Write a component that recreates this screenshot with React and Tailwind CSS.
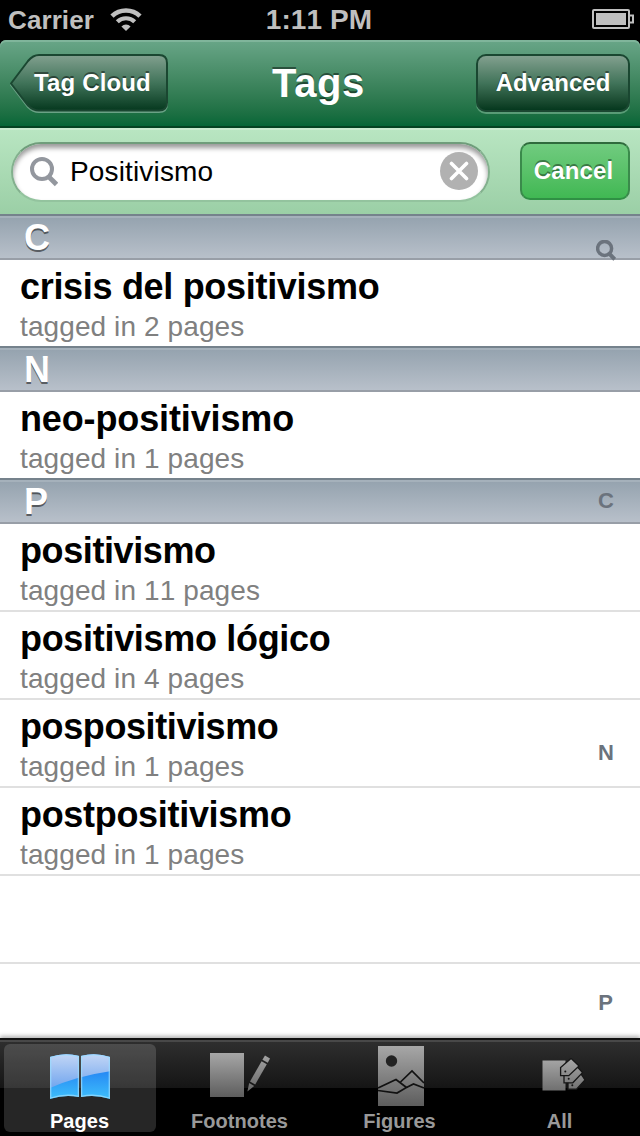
import { useState } from "react";

const sections = [
  { letter: "C", tags: [{ name: "crisis del positivismo", pages: 2, track: "tracking-[-0.31px]" }] },
  { letter: "N", tags: [{ name: "neo-positivismo", pages: 1, track: "tracking-[-0.13px]" }] },
  {
    letter: "P",
    tags: [
      { name: "positivismo", pages: 11, track: "tracking-[-0.4px]" },
      { name: "positivismo lógico", pages: 4, track: "tracking-[-0.31px]" },
      { name: "pospositivismo", pages: 1, track: "tracking-[-0.4px]" },
      { name: "postpositivismo", pages: 1, track: "tracking-[-0.31px]" },
    ],
  },
];

const SearchIcon = ({ className, ring = 4 }) => (
  <svg className={className} viewBox="0 0 28 30" fill="none" stroke="currentColor">
    <circle cx="12" cy="12" r="10" strokeWidth={ring} />
    <path d="M18.5 19.5 L26.5 27.5" strokeWidth={ring + 0.8} />
  </svg>
);

const StatusBar = () => (
  <div className="flex h-10 shrink-0 items-center justify-between bg-black pl-2 pr-[6px] text-[26px] font-bold leading-10 text-[#bfbfbf]">
    <div className="flex w-[200px] items-center">
      <span className="w-[102px] tracking-[0.1px]">Carrier</span>
      <svg width="32" height="24" viewBox="0 0 32 24" fill="none" stroke="#bfbfbf">
        <path d="M2 8.2 A20 20 0 0 1 30 8.2" strokeWidth="4.6" />
        <path d="M7.3 13.8 A12.4 12.4 0 0 1 24.7 13.8" strokeWidth="4.2" />
        <path d="M16 23 L11.4 18.4 A6.8 6.8 0 0 1 20.6 18.4 Z" fill="#bfbfbf" stroke="none" />
      </svg>
    </div>
    <span className="-ml-[4px] text-[28px] tracking-[0.1px] [font-kerning:none]">1:11 PM</span>
    <div className="-mt-[2px] flex w-[200px] justify-end">
      <svg width="42" height="20" viewBox="0 0 42 20" fill="none">
        <rect x="1" y="1" width="36" height="18" rx="1" stroke="#bfbfbf" strokeWidth="2" />
        <rect x="4" y="4" width="30" height="12" fill="#bfbfbf" />
        <path d="M38 6.5 H41 V13.5 H38" stroke="#bfbfbf" strokeWidth="2" />
      </svg>
    </div>
  </div>
);

const NavBar = () => (
  <div className="shrink-0 bg-black">
    <div className="flex h-[88px] items-start justify-between rounded-t-[6px] border-b-2 border-[#034322] bg-linear-to-b from-[#69a688] to-[#046637] px-[10px] pt-[14px] text-white shadow-[inset_0_2px_0_#80b59b]">
      <button className="relative h-[59px] w-[158px]">
        <svg className="absolute left-0 top-0" width="158" height="60" viewBox="0 0 158 60">
          <defs>
            <linearGradient id="back" x1="0" y1="0" x2="0" y2="1">
              <stop offset="0" stopColor="#82a08f" />
              <stop offset="0.5" stopColor="#41745a" />
              <stop offset="1" stopColor="#05381e" />
            </linearGradient>
          </defs>
          <path
            d="M1 31 L18 8 Q23 2.5 29 2.5 H149 Q157 2.5 157 10.5 V50 Q157 58 149 58 H29 Q23 58 18 53 Z"
            fill="none"
            stroke="#6ba286"
            strokeWidth="2"
          />
          <path
            d="M1 29.5 L18 7 Q23 1 29 1 H149 Q157 1 157 9 V48.5 Q157 56.5 149 56.5 H29 Q23 56.5 18 51.5 Z"
            fill="url(#back)"
            stroke="#1a4731"
            strokeWidth="2"
          />
        </svg>
        <span className="relative -top-px block pl-[7px] text-[24px] font-bold leading-[58px] tracking-[0.15px] [text-shadow:0_-2px_0_rgba(0,0,0,0.45)]">
          Tag Cloud
        </span>
      </button>
      <h1 className="-ml-[7px] text-[40px] font-bold leading-[58px] tracking-[0.6px] [text-shadow:0_-2px_0_rgba(0,0,0,0.45)]">
        Tags
      </h1>
      <button className="h-[58px] w-[154px] rounded-[10px] border-2 border-[#1a4731] bg-linear-to-b from-[#82a08f] via-[#41745a] to-[#05381e] text-[24px] font-bold leading-[54px] shadow-[0_2px_0_rgba(150,200,170,0.5)] [text-shadow:0_-2px_0_rgba(0,0,0,0.45)]">
        Advanced
      </button>
    </div>
  </div>
);

const SearchBar = ({ text, setText }) => (
  <div className="flex h-[86px] shrink-0 items-start justify-between bg-linear-to-b from-[#b9e6c2] to-[#9bcfa6] px-[10px] pt-[14px] shadow-[inset_0_2px_0_#c8ebcf]">
    <div className="ml-[1px] flex h-[60px] w-[479px] items-center rounded-full border-2 border-t-[#6f9d7b] border-x-[#83b08e] border-b-[#93c39e] bg-white pl-[17px] pr-[10px] shadow-[inset_0_4px_5px_rgba(0,0,0,0.4)]">
      <SearchIcon className="h-[30px] w-[28px] text-[#93979e]" />
      <input
        className="ml-[12px] h-10 w-[370px] bg-transparent text-[28px] tracking-[0.15px] text-black outline-none"
        value={text}
        onChange={(e) => setText(e.target.value)}
      />
      <button className="-mt-[2px] flex size-[38px] shrink-0 items-center justify-center rounded-full bg-[#b1b1b1]" onClick={() => setText("")}>
        <svg width="20" height="20" viewBox="0 0 20 20" stroke="white" strokeWidth="3.6" strokeLinecap="round">
          <path d="M2.5 2.5 L17.5 17.5 M17.5 2.5 L2.5 17.5" />
        </svg>
      </button>
    </div>
    <button className="h-[58px] w-[110px] rounded-[10px] border-2 border-t-[#2f6a3c] border-x-[#3a8a4b] border-b-[#2f9044] bg-linear-to-b from-[#70cb7f] to-[#40b853] pr-[3px] text-[24px] font-bold leading-[54px] tracking-[0.1px] text-white [text-shadow:0_-2px_0_rgba(0,0,0,0.4)]">
      Cancel
    </button>
  </div>
);

const SectionHeader = ({ letter }) => (
  <div className="h-[46px] border-b-2 border-t-2 border-b-[#989ea7] border-t-[#75828c] bg-linear-to-b from-[#94a2ae] to-[#b8c0ca] pl-6 text-[36px] font-bold leading-[43px] text-white shadow-[inset_0_2px_0_#a5b1bb] [text-shadow:0_2px_0_rgba(0,0,0,0.5)]">
    {letter}
  </div>
);

const TagRow = ({ tag, last }) => (
  <div className={`pl-5 [font-kerning:none] ${last ? "h-[86px]" : "h-[88px] border-b-2 border-[#e0e0e0]"}`}>
    <div className={`pt-[4px] text-[36px] font-bold leading-[45px] text-black ${tag.track}`}>{tag.name}</div>
    <div className="text-[28px] leading-[36px] tracking-[0.1px] text-[#808080]">tagged in {tag.pages} pages</div>
  </div>
);

const IndexBar = () => (
  <div className="absolute right-[22px] top-[26px] flex w-6 flex-col items-center text-[22px] font-bold leading-[24px] text-[#6b737d]">
    <SearchIcon className="h-[21px] w-5" ring={5} />
    <span className="mt-[228px]">C</span>
    <span className="mt-[228px]">N</span>
    <span className="mt-[226px] -ml-px">P</span>
  </div>
);

const PagesIcon = () => (
  <svg width="64" height="50" viewBox="0 0 64 50">
    <defs>
      <linearGradient id="sky" x1="0" y1="0" x2="0" y2="1">
        <stop offset="0" stopColor="#c7d9f6" />
        <stop offset="1" stopColor="#6fa4ee" />
      </linearGradient>
      <linearGradient id="deep" x1="0" y1="0" x2="0" y2="1">
        <stop offset="0.3" stopColor="#2380f3" />
        <stop offset="1" stopColor="#40c5fc" />
      </linearGradient>
      <clipPath id="book">
        <path d="M2 5 Q17 0 31 4 V45 Q17 42 2 47 Z M33 4 Q47 0 62 5 V47 Q47 42 33 45 Z" />
      </clipPath>
    </defs>
    <g clipPath="url(#book)">
      <rect width="64" height="50" fill="url(#deep)" />
      <path d="M0 0 H64 V19 Q28 24 0 37 Z" fill="url(#sky)" />
    </g>
    <path
      d="M2.7 5.3 Q17 .8 30.4 4.5 V44.3 Q17 41.5 2.7 46 Z M33.6 4.5 Q47 .8 61.3 5.3 V46 Q47 41.5 33.6 44.3 Z"
      fill="none"
      stroke="#9bdcff"
      strokeOpacity="0.75"
      strokeWidth="1.3"
    />
  </svg>
);

const GrayGradient = ({ id, height }) => (
  <linearGradient id={id} gradientUnits="userSpaceOnUse" x1="0" y1="0" x2="0" y2={height}>
    <stop offset="0" stopColor="#a8a8a8" />
    <stop offset="1" stopColor="#5c5c5c" />
  </linearGradient>
);

const FootnotesIcon = () => (
  <svg width="62" height="46" viewBox="0 0 62 46">
    <defs>
      <GrayGradient id="foot" height="46" />
    </defs>
    <g fill="url(#foot)">
      <path d="M1 1 H35 V45 H1 Z" />
      <path d="M56 3.5 L61 6.4 L58.8 10.8 L53.4 7.8 Z" />
      <path d="M52.6 9.2 L57.8 12.2 L46.2 32.6 L41 29.6 Z" />
      <path d="M40.2 31 L45.2 33.9 L38.4 39.5 Z" />
    </g>
  </svg>
);

const FiguresIcon = () => (
  <svg width="48" height="62" viewBox="0 0 48 62">
    <defs>
      <GrayGradient id="fig" height="62" />
    </defs>
    <path d="M1 1 H47 V61 H1 Z" fill="url(#fig)" />
    <circle cx="14.5" cy="16" r="5.7" fill="#222" />
    <g fill="none" stroke="#111" strokeWidth="1.7">
      <path d="M1 43 L19 34.5 L29.5 42.5 L20 48 L1 45.5" />
      <path d="M23.5 37 L35 26 L47 38" />
      <path d="M29.5 42.5 L36.5 39 L47 43" />
    </g>
  </svg>
);

const AllIcon = () => (
  <svg width="44" height="34" viewBox="0 0 44 34">
    <defs>
      <GrayGradient id="all" height="44" />
    </defs>
    <g fill="url(#all)">
      <path d="M0.5 2.5 H23.5 V32.5 H0.5 Z" />
      <g stroke="#161616" strokeWidth="1.3">
        <path d="M26 24 V31.2 H34.5 L43 22 L39 16 Z" />
        <path d="M22 17 V24.8 H30.8 L40.5 14.6 L35.5 9 Z" />
        <path d="M18.6 9.5 V17.7 H26.8 L37 8 L29 0.4 Z" />
      </g>
    </g>
    <g fill="#161616">
      <circle cx="23.3" cy="13.5" r="1" />
      <circle cx="26.7" cy="20.8" r="1" />
      <circle cx="30.3" cy="27.2" r="1" />
    </g>
  </svg>
);

const tabs = [
  { name: "Pages", icon: <PagesIcon />, pad: "pt-[8px]" },
  { name: "Footnotes", icon: <FootnotesIcon />, pad: "pt-[8px]" },
  { name: "Figures", icon: <FiguresIcon />, pad: "pt-[1px] pl-[2px]" },
  { name: "All", icon: <AllIcon />, pad: "pt-[14px] pl-[7px]" },
];

const TabBar = ({ active, setActive }) => (
  <div className="flex h-[98px] shrink-0 border-t-2 border-[#111] bg-[linear-gradient(to_bottom,#484848_0,#484848_2px,#2e2e2e_2px,#151515_48px,#000_48px)] px-1 pt-1 shadow-[0_-2px_4px_rgba(0,0,0,0.3)]">
    {tabs.map((tab) => (
      <div
        key={tab.name}
        onClick={() => setActive(tab.name)}
        className={`mr-2 flex h-[88px] w-[152px] flex-col items-center rounded-[6px] last:mr-0 ${
          active == tab.name ? "bg-white/15 text-white" : "text-[#999]"
        }`}
      >
        <div className={`h-[64px] shrink-0 ${tab.pad}`}>{tab.icon}</div>
        <div className="-ml-px text-[20px] font-bold leading-[27px] tracking-[0.05px]">{tab.name}</div>
      </div>
    ))}
  </div>
);

const App = () => {
  const [text, setText] = useState("Positivismo");
  const [active, setActive] = useState("Pages");

  return (
    <div className="flex h-[1136px] w-[640px] flex-col overflow-hidden bg-white font-['Liberation_Sans',Arial,sans-serif]">
      <StatusBar />
      <NavBar />
      <SearchBar text={text} setText={setText} />
      <div className="relative h-[824px] shrink-0 overflow-hidden">
        {sections.map((section, i) => (
          <div key={section.letter}>
            <SectionHeader letter={section.letter} />
            {section.tags.map((tag) => (
              <TagRow key={tag.name} tag={tag} last={i < sections.length - 1} />
            ))}
          </div>
        ))}
        {/* empty row under the results */}
        <div className="h-[88px] border-b-2 border-[#e0e0e0]"></div>
        <IndexBar />
      </div>
      <TabBar active={active} setActive={setActive} />
    </div>
  );
};

export default App;
